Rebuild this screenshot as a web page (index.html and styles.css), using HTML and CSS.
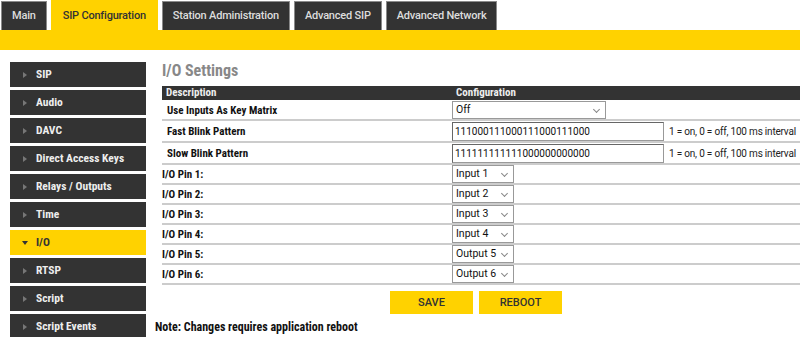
FILE: index.html
```html
<!DOCTYPE html>
<html>
<head>
    <title>I/O Settings</title>
    <link rel="stylesheet" href="styles.css">
</head>
<body>
    <div class="tabs">
        <div class="tab">Main</div>
        <div class="tab active">SIP Configuration</div>
        <div class="tab">Station Administration</div>
        <div class="tab">Advanced SIP</div>
        <div class="tab">Advanced Network</div>
    </div>
    <div class="tab-bar"></div>

    <div class="page">
        <div class="sidebar">
            <div class="side-item"><span class="arrow"></span>SIP</div>
            <div class="side-item"><span class="arrow"></span>Audio</div>
            <div class="side-item"><span class="arrow"></span>DAVC</div>
            <div class="side-item"><span class="arrow"></span>Direct Access Keys</div>
            <div class="side-item"><span class="arrow"></span>Relays / Outputs</div>
            <div class="side-item"><span class="arrow"></span>Time</div>
            <div class="side-item open"><span class="arrow"></span>I/O</div>
            <div class="side-item"><span class="arrow"></span>RTSP</div>
            <div class="side-item"><span class="arrow"></span>Script</div>
            <div class="side-item"><span class="arrow"></span>Script Events</div>
        </div>

        <div class="content">
            <h2>I/O Settings</h2>
            <table class="settings">
                <tr class="head">
                    <th class="desc">Description</th>
                    <th colspan="2">Configuration</th>
                </tr>
                <tr class="top">
                    <td class="label pad">Use Inputs As Key Matrix</td>
                    <td colspan="2"><div class="select wide">Off</div></td>
                </tr>
                <tr class="top">
                    <td class="label pad">Fast Blink Pattern</td>
                    <td class="field"><div class="text-input">111000111000111000111000</div></td>
                    <td class="hint">1 = on, 0 = off, 100 ms interval</td>
                </tr>
                <tr class="top">
                    <td class="label pad">Slow Blink Pattern</td>
                    <td class="field"><div class="text-input">111111111111000000000000</div></td>
                    <td class="hint">1 = on, 0 = off, 100 ms interval</td>
                </tr>
                <tr>
                    <td class="label">I/O Pin 1:</td>
                    <td colspan="2"><div class="select">Input 1</div></td>
                </tr>
                <tr>
                    <td class="label">I/O Pin 2:</td>
                    <td colspan="2"><div class="select">Input 2</div></td>
                </tr>
                <tr>
                    <td class="label">I/O Pin 3:</td>
                    <td colspan="2"><div class="select">Input 3</div></td>
                </tr>
                <tr>
                    <td class="label">I/O Pin 4:</td>
                    <td colspan="2"><div class="select">Input 4</div></td>
                </tr>
                <tr>
                    <td class="label">I/O Pin 5:</td>
                    <td colspan="2"><div class="select">Output 5</div></td>
                </tr>
                <tr>
                    <td class="label">I/O Pin 6:</td>
                    <td colspan="2"><div class="select">Output 6</div></td>
                </tr>
            </table>
            <div class="buttons">
                <button>SAVE</button>
                <button>REBOOT</button>
            </div>
        </div>
    </div>
    <div class="note">Note: Changes requires application reboot</div>
</body>
</html>
```

FILE: styles.css
```css
body {
    margin: 0;
    background: white;
    font-family: Roboto, "Liberation Sans", sans-serif;
    overflow: hidden;
}

.tabs {
    display: flex;
    gap: 4px;
    height: 30px;
    padding-left: 1px;
}

.tab {
    background: #333;
    color: #ddd;
    border: 1px solid #8a8a8a;
    border-bottom: none;
    margin-top: 1px;
    font-size: 11px;
    letter-spacing: -0.2px;
    font-weight: 500;
    padding: 0 10px;
    line-height: 28px;
}

.tab.active {
    background: #ffd200;
    color: #333;
    border-color: #ffd200;
    margin-top: 0;
    line-height: 29px;
    padding: 0 11px;
}

.tab-bar {
    background: #ffd200;
    height: 20px;
}

.page {
    display: flex;
    padding-top: 12px;
}

.sidebar {
    width: 136px;
    margin-left: 10px;
    display: flex;
    flex-direction: column;
    gap: 3px;
}

.side-item {
    background: #333;
    color: #eee;
    height: 25px;
    line-height: 25px;
    font-family: "Liberation Sans Narrow", "Roboto Condensed", Roboto, sans-serif;
    font-weight: bold;
    font-size: 11.5px;
    display: flex;
    align-items: center;
}

.arrow {
    width: 0;
    height: 0;
    border-left: 4px solid #777;
    border-top: 3px solid transparent;
    border-bottom: 3px solid transparent;
    margin: 0 9px 0 13px;
}

.side-item.open {
    background: #ffd200;
    color: #333;
}

.side-item.open .arrow {
    border-left: 3px solid transparent;
    border-right: 3px solid transparent;
    border-top: 4px solid #333;
    border-bottom: none;
    margin: 0 8px 0 12px;
}

.content {
    flex: 1;
    margin-left: 16px;
}

h2 {
    margin: 0 0 6px;
    color: #888;
    font-family: "Liberation Sans Narrow", "Roboto Condensed", Roboto, sans-serif;
    font-size: 16px;
    line-height: 18px;
}

.settings {
    width: 100%;
    border-collapse: collapse;
    font-family: "Liberation Sans Narrow", "Roboto Condensed", Roboto, sans-serif;
    font-size: 11px;
}

.settings th {
    background: #333;
    color: #eee;
    text-align: left;
    font-weight: bold;
    height: 14px;
    padding: 0 4px;
    line-height: 14px;
}

.settings th.desc {
    width: 282px;
}

.settings td {
    border-bottom: 2px solid #ccc;
    padding: 0;
    height: 18px;
    color: #111;
}

.settings tr.top td {
    padding-top: 1px;
}

.settings td.label {
    font-weight: bold;
    width: 290px;
}

.settings td.pad {
    padding-left: 5px;
    width: 285px;
}

.settings td.field {
    width: 214px;
}

.settings td.hint {
    font-family: Roboto, "Liberation Sans", sans-serif;
    font-size: 10px;
    letter-spacing: -0.2px;
    padding-left: 3px;
    white-space: nowrap;
    color: #222;
}

.select {
    box-sizing: border-box;
    width: 62px;
    height: 18px;
    border: 1px solid #999;
    background: white;
    font-family: Roboto, "Liberation Sans", sans-serif;
    font-size: 10.5px;
    line-height: 16px;
    padding-left: 3px;
    position: relative;
    color: #111;
}

.select::after {
    content: "";
    position: absolute;
    right: 6px;
    top: 5px;
    width: 4px;
    height: 4px;
    border-right: 1px solid #888;
    border-bottom: 1px solid #888;
    transform: rotate(45deg);
}

.select.wide {
    width: 154px;
}

.text-input {
    box-sizing: border-box;
    width: 212px;
    height: 19px;
    border: 1px solid #999;
    border-top-color: #666;
    border-left-color: #666;
    font-family: Roboto, "Liberation Sans", sans-serif;
    font-size: 10px;
    line-height: 17px;
    padding-left: 2px;
    color: #111;
}

.buttons {
    display: flex;
    justify-content: center;
    gap: 6px;
    margin-top: 6px;
    padding-right: 10px;
}

.buttons button {
    width: 83px;
    height: 23px;
    background: #ffd200;
    border: none;
    color: #333;
    font-family: Roboto, "Liberation Sans", sans-serif;
    font-weight: 500;
    font-size: 11px;
}

.note {
    position: absolute;
    left: 155px;
    top: 320px;
    font-family: "Liberation Sans Narrow", "Roboto Condensed", Roboto, sans-serif;
    font-weight: bold;
    font-size: 12px;
    color: #111;
}
```
